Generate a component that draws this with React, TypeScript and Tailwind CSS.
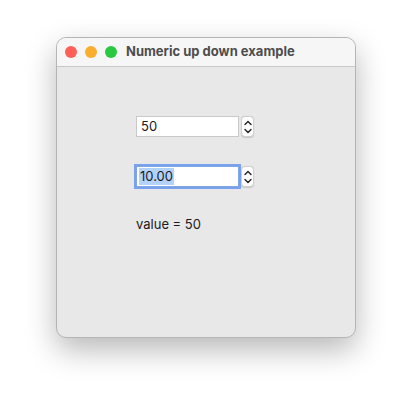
import React from "react";

function Stepper() {
  return (
    <div className="ml-[2px] flex h-[21px] w-[13px] flex-col items-center justify-center gap-[2px] rounded-[4px] border border-[#d0d0d0] bg-white shadow-[0_0.5px_1px_rgba(0,0,0,0.15)]">
      <svg width="8" height="6" viewBox="0 0 8 6">
        <path d="M1 4.5 L4 1.5 L7 4.5" fill="none" stroke="#222" strokeWidth="1.4" strokeLinecap="round" strokeLinejoin="round" />
      </svg>
      <svg width="8" height="6" viewBox="0 0 8 6">
        <path d="M1 1.5 L4 4.5 L7 1.5" fill="none" stroke="#222" strokeWidth="1.4" strokeLinecap="round" strokeLinejoin="round" />
      </svg>
    </div>
  );
}

export default function App() {
  return (
    <div className="h-[412px] w-[412px] bg-white pl-[56px] pt-[37px]" style={{ fontFamily: "Inter, 'Liberation Sans', sans-serif" }}>
      <div className="flex h-[301px] w-[300px] flex-col overflow-hidden rounded-[10px] border border-[#b5b5b5] bg-[#e8e8e8] shadow-[0_12px_30px_rgba(0,0,0,0.28)]">
        <div className="flex h-[29px] items-center border-b border-[#c8c8c8] bg-[#f6f6f6] pl-[8px]">
          <span className="h-[12px] w-[12px] rounded-full bg-[#fe5f57]" />
          <span className="ml-[8px] h-[12px] w-[12px] rounded-full bg-[#f9ae2f]" />
          <span className="ml-[8px] h-[12px] w-[12px] rounded-full bg-[#28c840]" />
          <span className="ml-[9px] text-[13px] font-bold text-[#4d4d4d]">Numeric up down example</span>
        </div>
        <div className="flex flex-col pl-[79px] pt-[49px]">
          <div className="flex h-[21px] items-center">
            <div className="flex h-[21px] w-[103px] items-center border border-[#c9c9c9] bg-white pl-[4px] text-[13px] text-[#1a1a1a]">50</div>
            <Stepper />
          </div>
          <div className="mt-[29px] flex h-[21px] items-center">
            <div className="flex h-[21px] w-[103px] items-center border border-[#7fa7e8] bg-white pl-[2px] text-[13px] text-[#1a1a1a] outline outline-[2px] outline-[#78a3ec]">
              <span className="bg-[#b3d2fb] px-[1px] py-[1px] leading-[15px]">10.00</span>
            </div>
            <Stepper />
          </div>
          <div className="mt-[28px] text-[13px] text-[#1a1a1a]">value = 50</div>
        </div>
      </div>
    </div>
  );
}
